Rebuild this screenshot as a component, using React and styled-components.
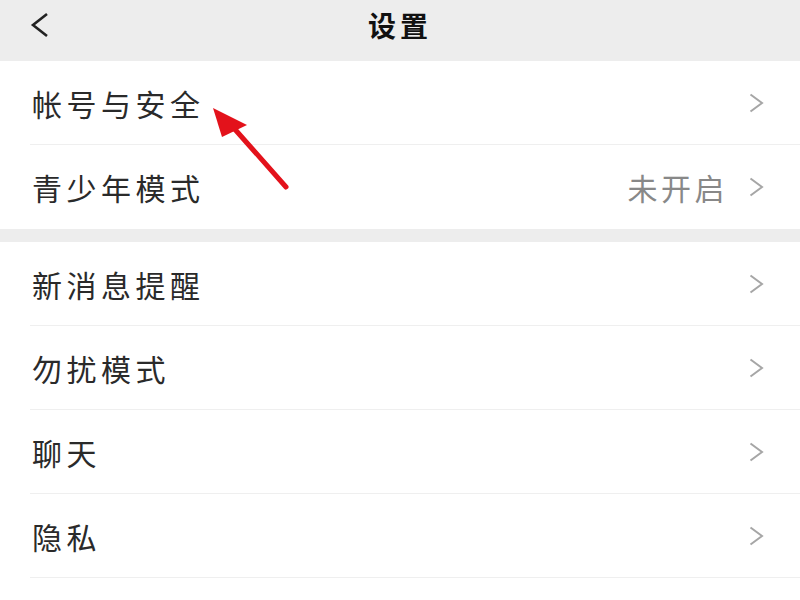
import React from 'react'
import styled, { createGlobalStyle } from 'styled-components'

const GlobalStyle = createGlobalStyle`
  html, body {
    margin: 0;
    padding: 0;
    background: #ededed;
  }
  body {
    font-family: 'Noto Sans CJK SC', 'Noto Sans', sans-serif;
  }
`

const Page = styled.div`
  position: relative;
  width: 800px;
  height: 600px;
  overflow: hidden;
  background: #ededed;
  display: flex;
  flex-direction: column;
`

const Header = styled.div`
  height: 61px;
  flex-shrink: 0;
  display: flex;
  align-items: center;
  justify-content: center;
  position: relative;
  background: #ededed;
`

const BackButton = styled.div`
  position: absolute;
  left: 28px;
  top: 11px;
  width: 24px;
  height: 28px;
  display: flex;
  align-items: center;
  justify-content: center;
`

const Title = styled.div`
  font-size: 28px;
  font-weight: 700;
  color: #111;
  letter-spacing: 4px;
  margin-top: -12px;
`

const Group = styled.div`
  background: #fff;
  display: flex;
  flex-direction: column;
  flex-shrink: 0;
  margin-bottom: ${p => (p.$gap ? '13px' : '0')};
`

const Row = styled.div`
  height: 84px;
  margin-left: 30px;
  padding-right: 36px;
  box-sizing: border-box;
  display: flex;
  align-items: center;
  border-bottom: ${p => (p.$last ? 'none' : '1px solid #efefef')};
`

const Label = styled.div`
  flex: 1;
  font-size: 30px;
  color: #2a2a2a;
  letter-spacing: 4.5px;
  padding-left: 2px;
`

const Value = styled.div`
  font-size: 30px;
  color: #888;
  letter-spacing: 3.5px;
  margin-right: 20px;
`

const Filler = styled.div`
  flex: 1;
  background: #fff;
`

const ArrowOverlay = styled.svg`
  position: absolute;
  left: 0;
  top: 0;
  pointer-events: none;
`

const Chevron = () => (
  <svg width="16" height="20" viewBox="0 0 16 20">
    <path d="M2.5 1.5 L14 10 L2.5 18.5" fill="none" stroke="#a6a6a6" strokeWidth="2" strokeLinejoin="miter" />
  </svg>
)

const BackIcon = () => (
  <svg width="22" height="26" viewBox="0 0 22 26">
    <path d="M18 2 L4 13 L18 24" fill="none" stroke="#222" strokeWidth="2.6" />
  </svg>
)

const groups = [
  [
    { label: '帐号与安全' },
    { label: '青少年模式', value: '未开启' },
  ],
  [
    { label: '新消息提醒' },
    { label: '勿扰模式' },
    { label: '聊天' },
    { label: '隐私' },
  ],
]

export default function App() {
  return (
    <>
      <GlobalStyle />
      <Page>
        <Header>
          <BackButton>
            <BackIcon />
          </BackButton>
          <Title>设置</Title>
        </Header>
        <Group $gap>
          {groups[0].map((item, i) => (
            <Row key={item.label} $last={i === groups[0].length - 1}>
              <Label>{item.label}</Label>
              {item.value && <Value>{item.value}</Value>}
              <Chevron />
            </Row>
          ))}
        </Group>
        <Group>
          {groups[1].map(item => (
            <Row key={item.label}>
              <Label>{item.label}</Label>
              <Chevron />
            </Row>
          ))}
        </Group>
        <Filler />
        <ArrowOverlay width="800" height="600" viewBox="0 0 800 600">
          <line x1="286" y1="187" x2="232" y2="126" stroke="#e3121b" strokeWidth="5" strokeLinecap="round" />
          <polygon points="213,108 247,125 222,137" fill="#e3121b" />
        </ArrowOverlay>
      </Page>
    </>
  )
}
